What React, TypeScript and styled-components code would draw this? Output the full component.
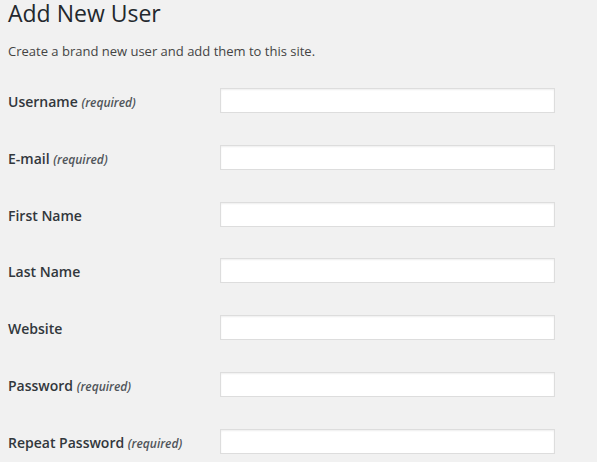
import React from "react";
import styled, { createGlobalStyle } from "styled-components";

const Global = createGlobalStyle`
  html, body { margin: 0; padding: 0; background: #f1f1f1; }
  body { font-family: "Open Sans", "Liberation Sans", sans-serif; color: #444; }
`;

const Page = styled.div`
  padding: 0 0 0 8px;
  width: 597px;
  height: 462px;
  box-sizing: border-box;
  overflow: hidden;
`;

const Title = styled.h1`
  margin: 0;
  font-size: 23px;
  font-weight: 400;
  line-height: 26px;
  color: #23282d;
`;

const Desc = styled.p`
  margin: 16px 0 0;
  font-size: 13px;
  line-height: 18px;
  color: #444;
`;

const Form = styled.div`
  margin-top: 28px;
  display: flex;
  flex-direction: column;
  gap: 31.8px;
`;

const Row = styled.div`
  display: grid;
  grid-template-columns: 212px 335px;
  align-items: center;
`;

const Label = styled.label`
  padding-top: 2px;
  font-size: 14px;
  font-weight: 600;
  color: #32373c;
`;

const Req = styled.span`
  font-size: 12px;
  font-style: italic;
  font-weight: 600;
  color: #50555a;
`;

const Input = styled.input`
  box-sizing: border-box;
  width: 335px;
  height: 25px;
  margin: 0;
  border: 1px solid #ddd;
  background: #fff;
  box-shadow: inset 0 1px 2px rgba(0, 0, 0, 0.07);
  outline: none;
`;

const fields = [
  { label: "Username", req: true },
  { label: "E-mail", req: true },
  { label: "First Name", req: false },
  { label: "Last Name", req: false },
  { label: "Website", req: false },
  { label: "Password", req: true },
  { label: "Repeat Password", req: true },
];

export default function App() {
  return (
    <Page>
      <Global />
      <Title>Add New User</Title>
      <Desc>Create a brand new user and add them to this site.</Desc>
      <Form>
        {fields.map((f) => (
          <Row key={f.label}>
            <Label>
              {f.label} {f.req && <Req>(required)</Req>}
            </Label>
            <Input type="text" />
          </Row>
        ))}
      </Form>
    </Page>
  );
}
